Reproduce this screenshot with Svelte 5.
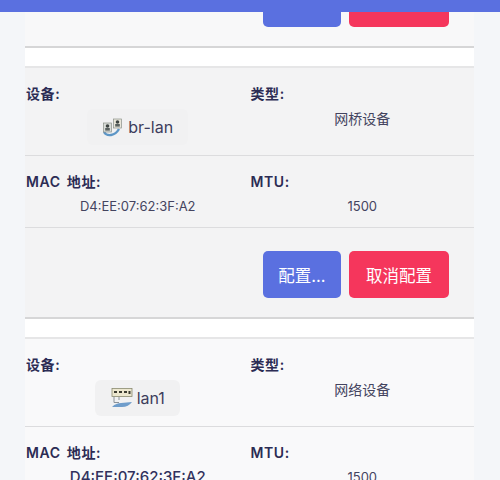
<script>
  const cards = [
    { device: 'br-lan', kind: 'bridge', type: '网桥设备', mac: 'D4:EE:07:62:3F:A2', mtu: '1500', light: false },
    { device: 'lan1', kind: 'switch', type: '网络设备', mac: 'D4:EE:07:62:3F:A2', mtu: '1500', light: true }
  ];
</script>

<div class="page">
  <div class="topbar"></div>
  <div class="content">
    <div class="actions first">
      <button class="btn config">配置...</button>
      <button class="btn cancel">取消配置</button>
    </div>

    {#each cards as card}
      <section class="card" class:light={card.light}>
        <div class="row head">
          <div class="cell">
            <div class="label">设备:</div>
            <div class="value">
              <span class="chip" class:narrow={card.kind === 'switch'}>
                {#if card.kind === 'bridge'}
                  <svg class="icon" viewBox="0 0 22 20" aria-hidden="true">
                    <path d="M2 15c3 5 11 4 15-3" fill="none" stroke="#5d96c6" stroke-width="2.4" />
                    <rect x="1.5" y="6" width="8" height="9" fill="#d9dcd8" stroke="#8a9089" stroke-width=".7" />
                    <rect x="11.5" y="2" width="8" height="9" fill="#e8e6da" stroke="#8a9089" stroke-width=".7" />
                    <circle cx="5.5" cy="9" r="1.8" fill="#3e4442" />
                    <circle cx="15.5" cy="5" r="1.8" fill="#3e4442" />
                    <rect x="3.2" y="11" width="4.6" height="2.6" fill="#5a6260" />
                    <rect x="13.2" y="7" width="4.6" height="2.6" fill="#5a6260" />
                  </svg>
                {:else}
                  <svg class="icon" viewBox="0 0 22 20" aria-hidden="true">
                    <rect x="1" y="0.5" width="20" height="8" fill="#ece7cf" stroke="#8b8a70" stroke-width=".8" />
                    <path d="M3 4h3M8 4h3M13 4h3M18.5 3v3" stroke="#3c3c32" stroke-width="2" />
                    <path d="M3 8.5v6h5M8 9v3" fill="none" stroke="#8b9298" stroke-width="1" />
                    <path d="M1 19c3-3 6-4 9-4 4 0 7-1 11-1-2 3-6 5-10 5z" fill="#6f9dcb" />
                  </svg>
                {/if}
                {card.device}
              </span>
            </div>
          </div>
          <div class="cell">
            <div class="label">类型:</div>
            <div class="value plain">{card.type}</div>
          </div>
        </div>

        <div class="row info">
          <div class="cell">
            <div class="label">MAC 地址:</div>
            <div class="value text" class:large={card.light}>{card.mac}</div>
          </div>
          <div class="cell">
            <div class="label">MTU:</div>
            <div class="value text">{card.mtu}</div>
          </div>
        </div>

        <div class="actions">
          <button class="btn config">配置...</button>
          <button class="btn cancel">取消配置</button>
        </div>
      </section>
    {/each}
  </div>
</div>

<style>
  :global(body) {
    margin: 0;
    background: #f4f6f9;
    font-family: Inter, "Noto Sans CJK SC", sans-serif;
  }
  .page {
    position: relative;
    height: 480px;
    overflow: hidden;
    padding: 0 26px 0 25px;
  }
  .topbar {
    position: absolute;
    top: 0;
    left: 0;
    right: 0;
    height: 12px;
    background: #5a70e0;
    z-index: 2;
  }
  .content {
    background: #fff;
  }
  .card {
    margin-top: 18px;
    background: #f3f3f4;
    border-top: 2px solid #e6e6e7;
    border-bottom: 2px solid #d6d6d7;
  }
  .card.light {
    background: #f9f9fa;
  }
  .row {
    display: grid;
    grid-template-columns: 1fr 1fr;
    border-bottom: 1px solid #dcdcde;
    box-sizing: border-box;
  }
  .head { height: 88px; }
  .info { height: 72px; }
  .cell {
    padding: 16px 0 0 1px;
  }
  .label {
    font-size: 14px;
    line-height: 20px;
    font-weight: 600;
    color: #2c2c54;
    letter-spacing: .6px;
    word-spacing: 2px;
  }
  .value {
    display: flex;
    justify-content: center;
    color: #44445f;
    font-size: 14px;
    margin-top: 5px;
  }
  .plain {
    margin-top: 3px;
    line-height: 24px;
  }
  .text {
    margin-top: 4px;
    line-height: 20px;
    font-size: 13px;
  }
  .text.large {
    font-size: 15px;
    font-weight: 500;
    color: #32325d;
  }
  .chip {
    display: inline-flex;
    align-items: center;
    gap: 4px;
    height: 36px;
    width: 101px;
    justify-content: center;
    box-sizing: border-box;
    background: #f1f1f2;
    border-radius: 6px;
    font-size: 16px;
    color: #3d3d5c;
  }
  .chip.narrow {
    width: 85px;
  }
  .icon {
    width: 22px;
    height: 20px;
  }
  .actions {
    height: 89px;
    display: flex;
    justify-content: flex-end;
    align-items: flex-start;
    gap: 8px;
    padding: 23px 25px 0 0;
    box-sizing: border-box;
  }
  .actions.first {
    height: 48px;
    align-items: flex-end;
    padding: 0 25px 19px 0;
    background: #f8f8f9;
    border-bottom: 2px solid #d6d6d7;
    overflow: hidden;
  }
  .actions.first .btn {
    padding-bottom: 8px;
  }
  .btn {
    flex: none;
    height: 47px;
    border: none;
    border-radius: 5px;
    color: #fff;
    font-family: inherit;
    font-size: 16.5px;
    padding: 0;
  }
  .config {
    width: 78px;
    background: #5a70e0;
  }
  .cancel {
    width: 100px;
    background: #f5365c;
  }
</style>
